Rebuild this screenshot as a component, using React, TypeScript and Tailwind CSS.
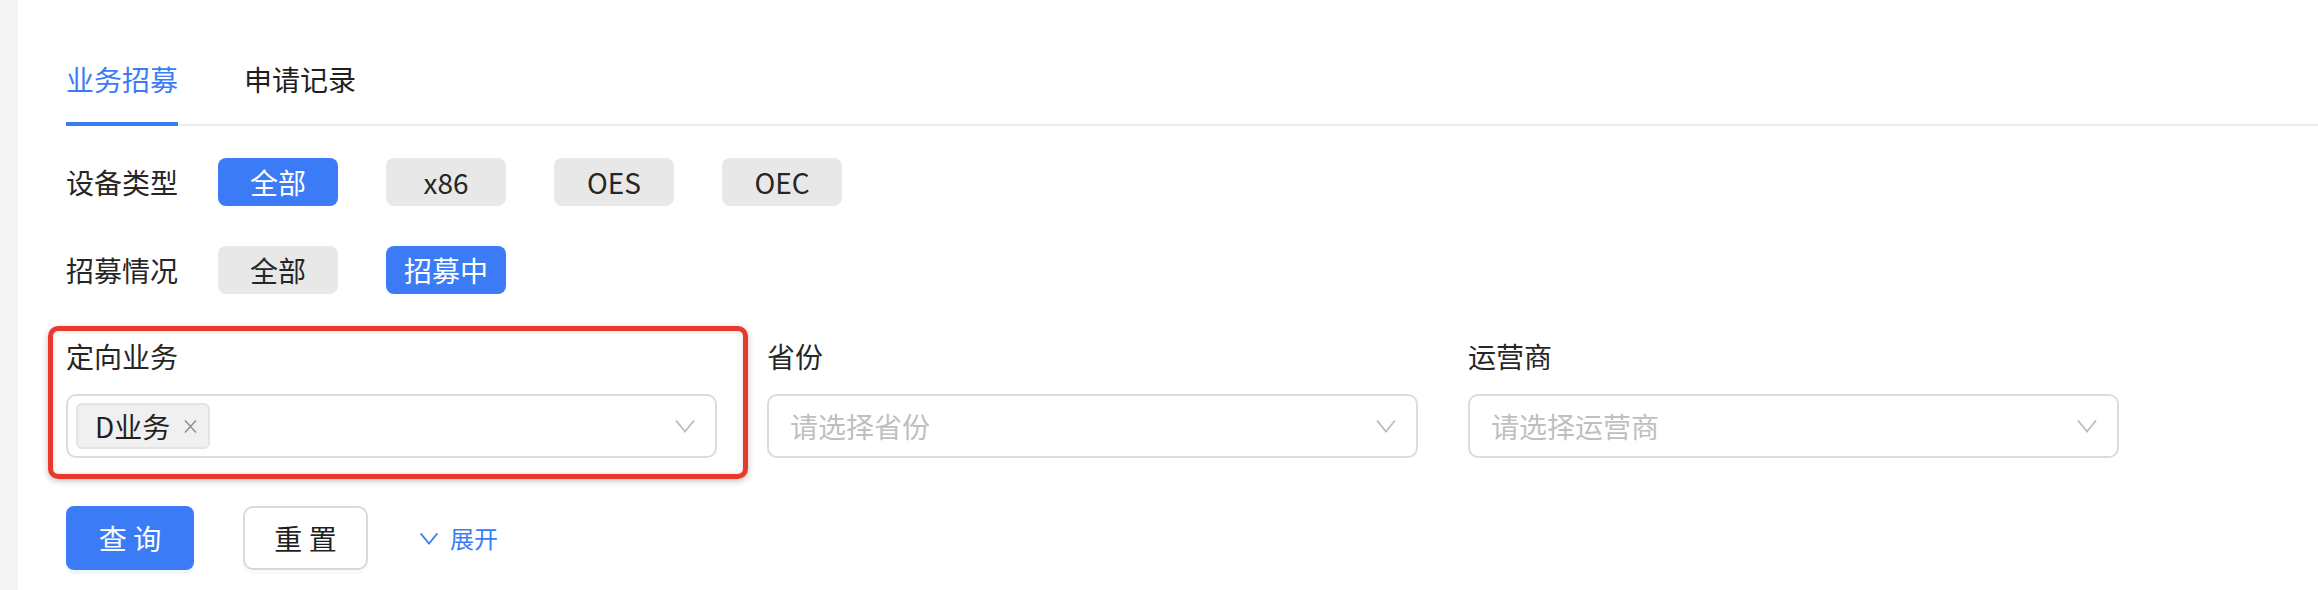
const deviceTypes = ["全部", "x86", "OES", "OEC"];
const recruitStates = ["全部", "招募中"];

function Chevron({ className }: { className?: string }) {
  return (
    <svg viewBox="0 0 20 14" className={className} fill="none">
      <polyline points="1,1.5 10,12.5 19,1.5" stroke="currentColor" strokeWidth="1.8" />
    </svg>
  );
}

function FilterRow({ label, items, active }: { label: string; items: string[]; active: number }) {
  return (
    <div className="flex items-center h-[48px]">
      <div className="w-[152px] text-[28px] leading-[48px] text-[#262626]">{label}</div>
      <div className="flex gap-[48px]">
        {items.map((it, i) => (
          <div
            key={it + i}
            className={
              i === active
                ? "w-[120px] h-[48px] rounded-[8px] bg-[#3b7cf6] text-white text-[28px] leading-[48px] text-center"
                : "w-[120px] h-[48px] rounded-[8px] bg-[#e8e8e8] text-[#262626] text-[28px] leading-[48px] text-center"
            }
          >
            {it}
          </div>
        ))}
      </div>
    </div>
  );
}

function SelectField({ label, placeholder, children }: { label: string; placeholder?: string; children?: React.ReactNode }) {
  return (
    <div className="w-[651px]">
      <div className="h-[44px] mb-[16px] text-[28px] leading-[44px] text-[#262626]">{label}</div>
      <div className="h-[64px] border-2 border-[#dcdcdc] rounded-[10px] flex items-center bg-white pr-[20px]">
        <div className="flex-1 flex items-center">
          {children ?? <span className="pl-[21px] text-[28px] text-[#bfbfbf]">{placeholder}</span>}
        </div>
        <Chevron className="w-[20px] h-[14px] text-[#bdbdbd]" />
      </div>
    </div>
  );
}

export default function App() {
  return (
    <div className="flex min-h-[590px] bg-[#f5f5f5] font-['Noto_Sans_CJK_SC',sans-serif]">
      <div className="w-[18px] shrink-0" />
      <div className="flex-1 bg-white pl-[48px] pb-[20px]">
        {/* tabs */}
        <div className="mt-[36px] flex gap-[66px] border-b-2 border-[#ececec]">
          <div className="h-[90px] -mb-[2px] border-b-4 border-[#3b7cf6] flex items-center text-[28px] text-[#3b7cf6]">
            业务招募
          </div>
          <div className="h-[90px] -mb-[2px] border-b-4 border-transparent flex items-center text-[28px] text-[#1f1f1f]">
            申请记录
          </div>
        </div>

        <div className="mt-[32px] flex flex-col gap-[40px]">
          <FilterRow label="设备类型" items={deviceTypes} active={0} />
          <FilterRow label="招募情况" items={recruitStates} active={1} />
        </div>

        {/* form */}
        <div className="mt-[40px] flex gap-[50px]">
          <div className="relative">
            <SelectField label="定向业务">
              <div className="ml-[8px] h-[46px] flex items-center rounded-[6px] border-2 border-[#e4e4e4] bg-[#f0f0f0] pl-[17px] pr-[11px]">
                <span className="text-[28px] text-[#1f1f1f] leading-[42px]">D业务</span>
                <svg viewBox="0 0 13 15" className="ml-[14px] w-[13px] h-[15px] text-[#8c8c8c]" fill="none">
                  <path d="M1 1.5 L12 13.5 M12 1.5 L1 13.5" stroke="currentColor" strokeWidth="1.4" />
                </svg>
              </div>
            </SelectField>
            <div className="absolute -left-[18px] -right-[31px] -top-[8px] -bottom-[21px] border-[5px] border-[#e8392c] rounded-[10px] shadow-[0_2px_6px_rgba(0,0,0,0.25),inset_0_0_4px_rgba(0,0,0,0.15)] pointer-events-none" />
          </div>
          <SelectField label="省份" placeholder="请选择省份" />
          <SelectField label="运营商" placeholder="请选择运营商" />
        </div>

        {/* actions */}
        <div className="mt-[48px] flex items-center">
          <button className="w-[128px] h-[64px] rounded-[8px] bg-[#3b7cf6] text-white text-[28px] shadow-[0_4px_0_rgba(59,124,246,0.08)]">
            查 询
          </button>
          <button className="ml-[49px] w-[125px] h-[64px] rounded-[10px] border-2 border-[#d9d9d9] bg-white text-[#1f1f1f] text-[28px] shadow-[0_4px_0_rgba(0,0,0,0.02)]">
            重 置
          </button>
          <div className="ml-[51px] flex items-center text-[#3b7cf6]">
            <Chevron className="w-[20px] h-[13px]" />
            <span className="ml-[11px] text-[24px]">展开</span>
          </div>
        </div>
      </div>
    </div>
  );
}
